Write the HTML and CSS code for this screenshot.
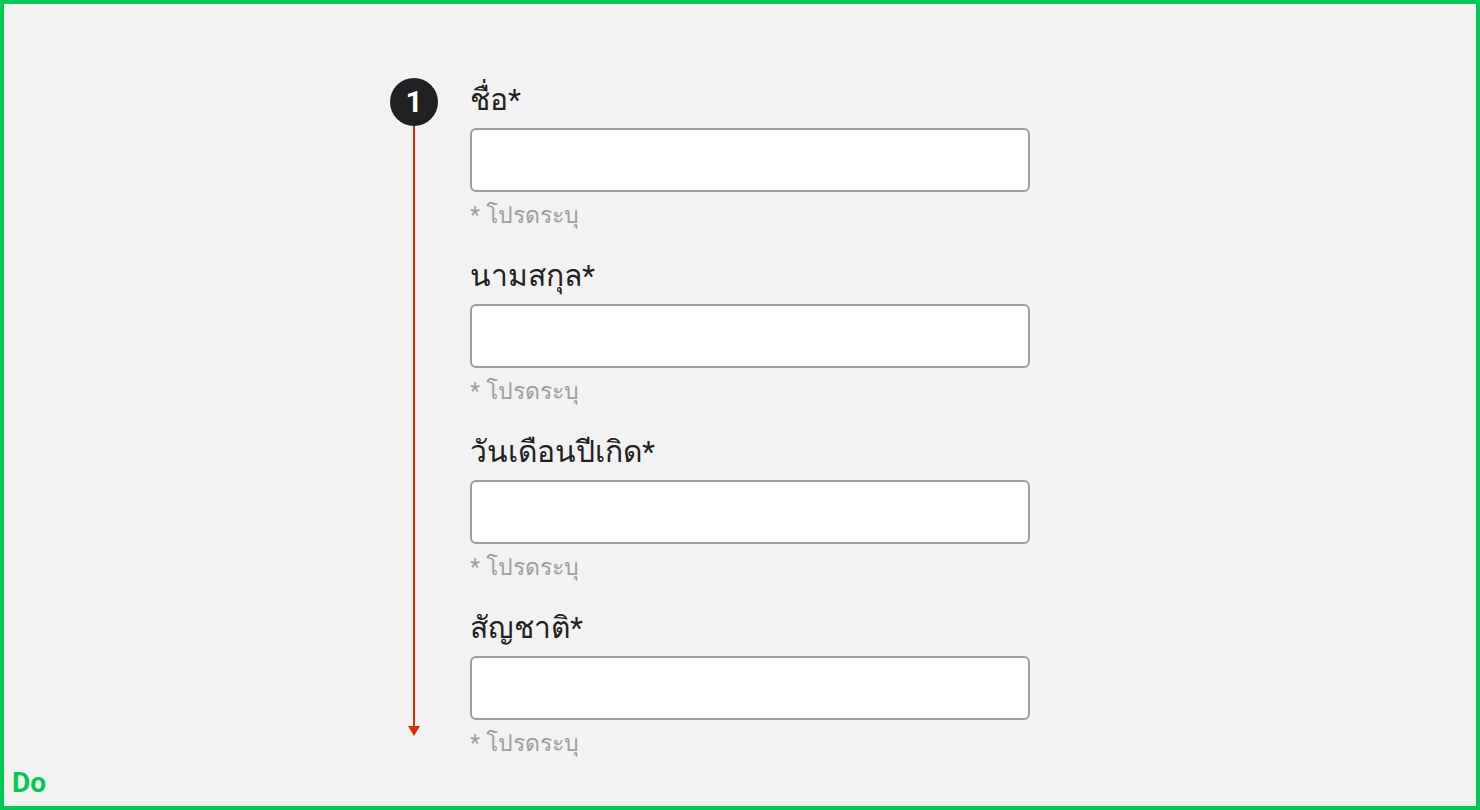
FILE: index.html
```html
<!DOCTYPE html>
<html lang="th">
<head>
<meta charset="utf-8">
<link rel="stylesheet" href="styles.css">
</head>
<body>
<div class="frame">
  <div class="form">
    <div class="timeline">
      <div class="step">1</div>
      <div class="line"></div>
      <div class="arrow"></div>
    </div>
    <div class="fields">
      <div class="field">
        <label class="label">ชื่อ*</label>
        <div class="input"></div>
        <div class="hint">* โปรดระบุ</div>
      </div>
      <div class="field">
        <label class="label">นามสกุล*</label>
        <div class="input"></div>
        <div class="hint">* โปรดระบุ</div>
      </div>
      <div class="field">
        <label class="label">วันเดือนปีเกิด*</label>
        <div class="input"></div>
        <div class="hint">* โปรดระบุ</div>
      </div>
      <div class="field">
        <label class="label">สัญชาติ*</label>
        <div class="input"></div>
        <div class="hint">* โปรดระบุ</div>
      </div>
    </div>
  </div>
  <div class="tag">Do</div>
</div>
</body>
</html>
```
FILE: styles.css
```css
html, body {
  margin: 0;
  padding: 0;
}
body {
  font-family: "Roboto", "Noto Sans", sans-serif;
}
.frame {
  position: relative;
  box-sizing: border-box;
  width: 1480px;
  height: 810px;
  border: 4px solid #00c853;
  background: #f2f2f2;
}
.form {
  display: flex;
  gap: 32px;
  padding-left: 386px;
  padding-top: 76px;
}
.timeline {
  width: 48px;
  display: flex;
  flex-direction: column;
  align-items: center;
  margin-top: -2px;
}
.step {
  width: 48px;
  height: 48px;
  border-radius: 50%;
  background: #212121;
  color: #fff;
  font-family: "Roboto", sans-serif;
  font-weight: 700;
  font-size: 30px;
  line-height: 48px;
  text-align: center;
}
.line {
  width: 2px;
  height: 600px;
  background: #dd2c00;
}
.arrow {
  width: 0;
  height: 0;
  border-left: 6px solid transparent;
  border-right: 6px solid transparent;
  border-top: 10px solid #dd2c00;
}
.fields {
  display: flex;
  flex-direction: column;
  gap: 24px;
}
.field {
  display: flex;
  flex-direction: column;
  gap: 8px;
}
.label {
  font-size: 30px;
  line-height: 40px;
  color: #212121;
}
.input {
  box-sizing: border-box;
  width: 560px;
  height: 64px;
  background: #fff;
  border: 2px solid #9e9e9e;
  border-radius: 6px;
}
.hint {
  font-size: 23px;
  line-height: 32px;
  color: #9e9e9e;
}
.tag {
  position: absolute;
  left: 8px;
  bottom: 7px;
  font-family: "Roboto", sans-serif;
  font-weight: 700;
  font-size: 28px;
  color: #00c853;
}
```
